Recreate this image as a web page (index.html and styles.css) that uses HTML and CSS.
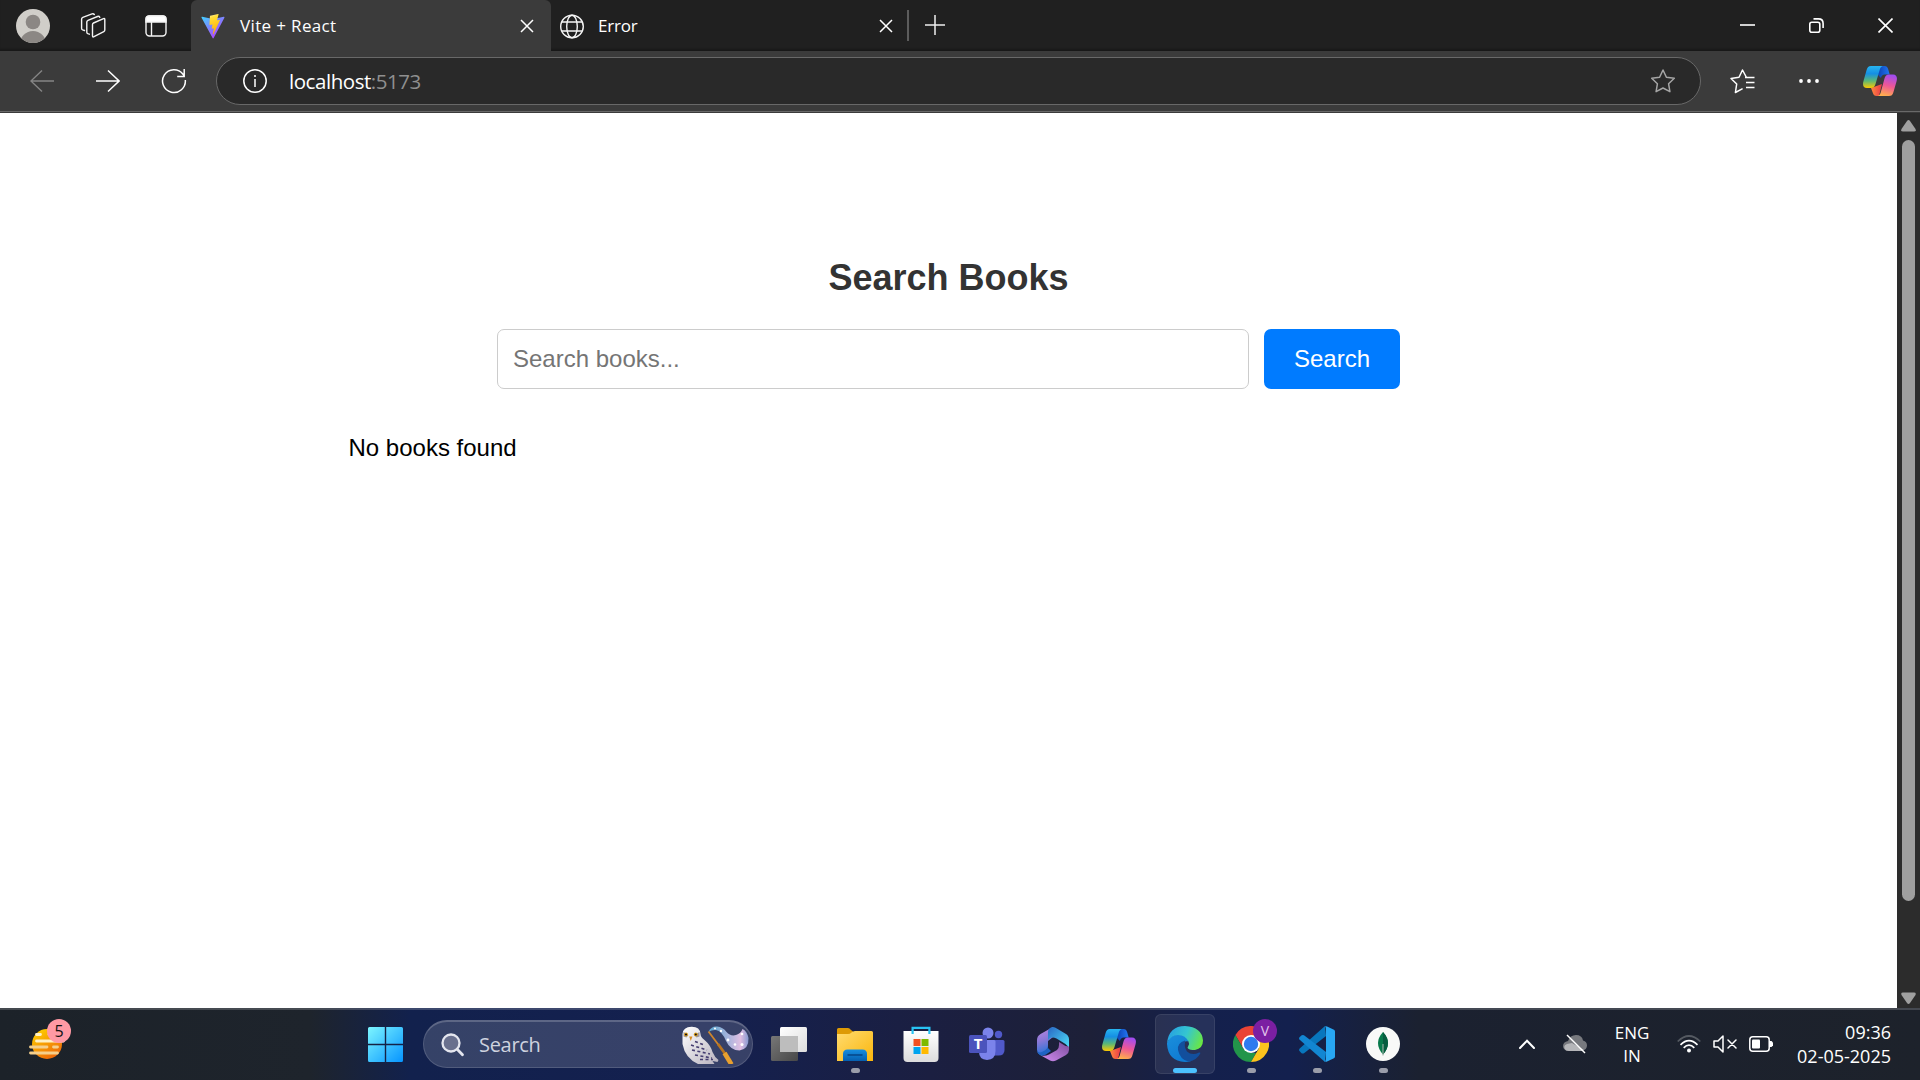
FILE: index.html
```
<!DOCTYPE html>
<html lang="en">
<head>
<meta charset="utf-8">
<title>Vite + React</title>
<link rel="stylesheet" href="styles.css">
</head>
<body>
<svg class="defs" width="0" height="0" aria-hidden="true">
  <defs>
    <linearGradient id="cpBlue" x1="0" y1="0" x2="0" y2="1"><stop offset="0" stop-color="#28b5f0"/><stop offset=".35" stop-color="#158fe4"/><stop offset=".68" stop-color="#5db874"/><stop offset="1" stop-color="#fdc900"/></linearGradient>
    <linearGradient id="cpPink" x1=".6" y1="0" x2=".35" y2="1"><stop offset="0" stop-color="#a14cf0"/><stop offset=".5" stop-color="#ef5795"/><stop offset="1" stop-color="#ffb04b"/></linearGradient>
    <linearGradient id="cpTop"><stop offset="0" stop-color="#0b3fae"/><stop offset="1" stop-color="#2277f5"/></linearGradient>
    <linearGradient id="cpLow"><stop offset="0" stop-color="#ff8a3d"/><stop offset="1" stop-color="#e8374a"/></linearGradient>
    <symbol id="copilot" viewBox="0 0 34 30">
      <path fill="url(#cpTop)" d="M14 0h7.500c2 0 3 1 3.600 3l1.600 5.500h-5c-2 0-3.200 1.500-3.800 3.500L15 9z"/>
      <path fill="url(#cpLow)" d="M8 22l11-4-3 12h-2.500c-2 0-3-1-3.600-3L8 22z"/>
      <path fill="url(#cpBlue)" d="M8 0h12.500c-2 0-3 1.200-3.700 3.500L12.500 18c-.8 2.600-2 4-4.500 4H4C.3 22-.7 19 .5 15L3.600 4C4.400 1.300 5.500 0 8 0z"/>
      <path fill="url(#cpPink)" d="M26 8.500h4c3.700 0 4.600 3 3.500 7l-3.100 10.700C29.600 29 28.500 30 26 30H14c2 0 3-1.200 3.700-3.500L21.500 12.500c.8-2.600 2-4 4.500-4z"/>
    </symbol>
    <linearGradient id="viteA" x1="0" y1="0" x2=".8" y2="1"><stop offset="0" stop-color="#41d1ff"/><stop offset="1" stop-color="#bd34fe"/></linearGradient>
    <linearGradient id="viteB" x1=".4" y1="0" x2=".6" y2="1"><stop offset="0" stop-color="#ffea83"/><stop offset=".15" stop-color="#ffdd35"/><stop offset="1" stop-color="#ffa800"/></linearGradient>
    <linearGradient id="sun" x1=".2" y1="0" x2=".8" y2="1"><stop offset="0" stop-color="#ffd000"/><stop offset="1" stop-color="#ec6008"/></linearGradient>
    <linearGradient id="win" gradientUnits="userSpaceOnUse" x1="0" y1="0" x2="35" y2="35"><stop offset="0" stop-color="#7df6ff"/><stop offset="1" stop-color="#0694ff"/></linearGradient>
    <linearGradient id="folder" x1="0" y1="0" x2="1" y2="1"><stop offset="0" stop-color="#ffdb70"/><stop offset="1" stop-color="#fbb60c"/></linearGradient>
    <linearGradient id="clip" x1="0" y1="0" x2="0" y2="1"><stop offset="0" stop-color="#178ee0"/><stop offset="1" stop-color="#065fb0"/></linearGradient>
    <linearGradient id="bag" x1="0" y1="0" x2="0" y2="1"><stop offset="0" stop-color="#fff"/><stop offset="1" stop-color="#dcdcdc"/></linearGradient>
    <linearGradient id="tvBack" x1="0" y1="0" x2="1" y2="1"><stop offset="0" stop-color="#777"/><stop offset="1" stop-color="#484848"/></linearGradient>
    <linearGradient id="tvFront" x1="0" y1="0" x2="1" y2="1"><stop offset="0" stop-color="#fff"/><stop offset="1" stop-color="#ddd"/></linearGradient>
    <linearGradient id="mA" x1="0" y1="0" x2=".2" y2="1"><stop offset="0" stop-color="#c08ae0"/><stop offset=".5" stop-color="#8a78d8"/><stop offset="1" stop-color="#2673d8"/></linearGradient>
    <linearGradient id="mB" x1="0" y1="0" x2="1" y2="1"><stop offset="0" stop-color="#2866c4"/><stop offset="1" stop-color="#4fe3fa"/></linearGradient>
    <linearGradient id="mC" x1="0" y1="1" x2="1" y2="0"><stop offset="0" stop-color="#d18df0"/><stop offset="1" stop-color="#7b4c9c"/></linearGradient>
    <linearGradient id="edA" x1="0" y1=".3" x2="1" y2=".6"><stop offset="0" stop-color="#269fe2"/><stop offset=".5" stop-color="#35c6d0"/><stop offset="1" stop-color="#6ae842"/></linearGradient>
    <linearGradient id="edB" x1="0" y1="0" x2=".5" y2="1"><stop offset="0" stop-color="#1b8fdc"/><stop offset="1" stop-color="#0f7bd2"/></linearGradient>
    <linearGradient id="owl" x1="0" y1="0" x2="1" y2="1"><stop offset="0" stop-color="#fff"/><stop offset="1" stop-color="#b7b2be"/></linearGradient>
    <linearGradient id="mist"><stop offset="0" stop-color="#5aa6cf"/><stop offset=".5" stop-color="#a9b4dc"/><stop offset=".8" stop-color="#e0bfe2"/><stop offset="1" stop-color="#8698cf"/></linearGradient>
  </defs>
</svg>

<div class="screen">
  <header class="titlebar">
    <div class="title-tools">
      <svg class="avatar" width="34" height="34" viewBox="0 0 34 34"><clipPath id="av"><circle cx="17" cy="17" r="17"/></clipPath><g clip-path="url(#av)"><path fill="#d0cec9" d="M0 0h34v34H0z"/><circle cx="17" cy="13" r="7.300" fill="#8b8784"/><circle cx="17" cy="35" r="13" fill="#8b8784"/></g></svg>
      <svg class="workspaces" width="26" height="26" viewBox="0 0 26 26" fill="none" stroke="#f4f4f4" stroke-width="1.400" stroke-linejoin="round" stroke-linecap="round"><path d="M12.500 11.500q0-1 1-1.500l10-4.300q1.300-.5 1.300.9v10.500q0 1.100-1 1.600l-9.800 5q-1.500.8-1.500-.9z"/><path d="M9.300 21.200l-1.500-.5q-1-.5-1-1.500V9q0-1.200 1.200-1.700l9.500-3.800q1.500-.6 2.300.8"/><path d="M4.500 17.500l-1.800-.6Q1.600 16.500 1.600 15.200V6q0-1.200 1.200-1.700L12 .9q1.500-.5 2.300.6"/></svg>
      <svg class="tab-actions" width="22" height="22" viewBox="0 0 22 22" fill="none" stroke="#f4f4f4" stroke-width="1.400"><rect x="1" y="1" width="20" height="20" rx="3.500"/><path d="M1 7V4q0-3 3-3h14q3 0 3 3v3z" fill="#fff"/><path d="M6.500 7v14"/></svg>
    </div>
    <div class="tab tab-active">
      <svg class="favicon" width="24" height="25" viewBox="0 0 410 404" preserveAspectRatio="none"><path fill="url(#viteA)" d="M400 60 216 389c-4 7-14 7-18 0L10 60c-4-7 2-16 10-14l184 33c1 0 2 0 4 0l180-33c8-1 14 7 12 14z"/><path fill="url(#viteB)" d="M293 2 157 28c-2 0-4 2-4 5l-8 141c0 4 3 6 6 5l38-9c4-1 7 2 6 6l-11 55c-1 4 2 7 6 6l24-7c3-1 7 2 6 6l-18 87c-1 5 6 8 9 4l2-3 111-222c2-3-1-8-5-7l-39 8c-4 1-7-3-6-7l26-88c1-4-3-7-7-6z"/></svg>
      <span class="tab-title">Vite + React</span>
      <svg class="tab-close" width="14" height="14" viewBox="0 0 14 14"><path d="M1 1l12 12M13 1L1 13" stroke="#fff" stroke-width="1.500"/></svg>
    </div>
    <div class="tab">
      <svg class="favicon" width="24" height="25" viewBox="0 0 24 25" fill="none" stroke="#f5f5f5" stroke-width="1.400"><circle cx="12" cy="12.500" r="11.300"/><ellipse cx="12" cy="12.500" rx="5.300" ry="11.300"/><path d="M1.700 8h20.600M1.700 17h20.600"/></svg>
      <span class="tab-title tab-title-short">Error</span>
      <svg class="tab-close" width="14" height="14" viewBox="0 0 14 14"><path d="M1 1l12 12M13 1L1 13" stroke="#fff" stroke-width="1.500"/></svg>
    </div>
    <i class="tab-sep"></i>
    <svg class="new-tab" width="22" height="22" viewBox="0 0 22 22"><path d="M11 1v20M1 11h20" stroke="#eee" stroke-width="1.500"/></svg>
    <div class="window-controls">
      <svg width="15" height="15" viewBox="0 0 15 15"><path d="M0 7h15" stroke="#fff" stroke-width="1.600"/></svg>
      <svg width="15" height="15" viewBox="0 0 15 15" fill="none" stroke="#fff" stroke-width="1.600"><rect x=".8" y="4.200" width="10" height="10" rx="2"/><path d="M4.500 .9H9.500Q14.100 .9 14.100 5.500V10"/></svg>
      <svg width="15" height="15" viewBox="0 0 15 15"><path d="M.5.5l14 14M14.500.5l-14 14" stroke="#fff" stroke-width="1.600"/></svg>
    </div>
  </header>

  <nav class="toolbar">
    <div class="nav-buttons">
      <svg width="24" height="24" viewBox="0 0 24 24" fill="none" stroke="#858585" stroke-width="1.400"><path d="M24 12H.8M12 1.500L.9 12 12 22.500"/></svg>
      <svg width="24" height="24" viewBox="0 0 24 24" fill="none" stroke="#fff" stroke-width="1.500"><path d="M0 12h23.200M12 1.500L23.100 12 12 22.500"/></svg>
      <svg class="reload" width="26" height="26" viewBox="0 0 26 26" fill="none" stroke="#fff" stroke-width="1.500"><path d="M24.300 12A11.400 11.400 0 1 1 22 6.200L23 8M23.200 1v7.500h-7"/></svg>
    </div>
    <div class="address">
      <svg class="info" width="24" height="24" viewBox="0 0 24 24" fill="none" stroke="#fff" stroke-width="1.500"><circle cx="12" cy="12" r="11.200"/><path d="M12 10v8M12 6v2"/></svg>
      <span class="url"><b>localhost</b>:5173</span>
      <svg class="star" width="26" height="26" viewBox="0 0 26 26" fill="none" stroke="#a5a5a5" stroke-width="1.500" stroke-linejoin="round"><path d="M13 2l3.400 7.200 7.900 1.100-5.700 5.500 1.300 7.900L13 20l-6.900 3.700 1.300-7.900-5.700-5.500 7.900-1.100z"/></svg>
    </div>
    <svg class="favorites" width="25" height="25" viewBox="0 0 25 25" fill="none" stroke="#fff" stroke-width="1.500" stroke-linejoin="round"><path d="M24 8.500h-7.500L12.500 1 9 8.300 1 9.500l5.700 5.500L5.400 23.500l7.200-3.800M16 13.500h8.500M16 18.500h8.500M15 8.500h9.500"/></svg>
    <svg class="more" width="20" height="4" viewBox="0 0 20 4" fill="#fff"><circle cx="2" cy="2" r="1.900"/><circle cx="10" cy="2" r="1.900"/><circle cx="18" cy="2" r="1.900"/></svg>
    <svg class="copilot" width="34" height="30"><use href="#copilot"/></svg>
  </nav>

  <div class="viewport">
    <main class="page">
      <h2 class="heading">Search Books</h2>
      <form class="search-form">
        <input class="search-input" type="text" placeholder="Search books...">
        <button class="search-button" type="button">Search</button>
      </form>
      <p class="empty">No books found</p>
    </main>
    <div class="scrollbar">
      <svg width="15" height="12" viewBox="0 0 15 12"><path fill="#a0a0a0" d="M6 1q1.500-1.800 3 0l5.500 8q1 2.500-1.500 2.500H2Q-.5 11.500.5 9z"/></svg>
      <i class="thumb"></i>
      <svg width="15" height="12" viewBox="0 0 15 12"><path fill="#a0a0a0" d="M6 11q1.500 1.800 3 0l5.500-8Q15.500.5 13 .5H2Q-.5.5.5 3z"/></svg>
    </div>
  </div>

  <footer class="taskbar">
    <div class="widgets">
      <svg width="36" height="30" viewBox="0 0 36 30"><circle cx="18" cy="15" r="15" fill="url(#sun)"/><g stroke="#fff0c4" stroke-width="2.800" stroke-linecap="round"><path d="M7.500 5.500h4M7.500 12h27M20 5.500h3" /><path stroke="#f5cf8b" d="M1.500 18h16.500M24.500 18h4M1.500 24h27"/></g></svg>
      <span class="badge">5</span>
    </div>
    <svg class="start" width="35" height="35" viewBox="0 0 35 35" fill="url(#win)"><path d="M1.500 0H16.800V16.800H0V1.500Q0 0 1.500 0zM18.200 0H33.500Q35 0 35 1.500V16.800H18.200zM0 18.200H16.800V35H1.500Q0 35 0 33.500zM18.200 18.200H35V33.500Q35 35 33.500 35H18.200z"/></svg>
    <div class="task-search">
      <svg width="24" height="24" viewBox="0 0 24 24" fill="none" stroke="#e4e6ef" stroke-width="2.300" stroke-linecap="round"><circle cx="10" cy="10" r="8.500" fill="#69708e"/><path d="M16.200 16.200l5.300 5.500" stroke-width="2.800"/></svg>
      <span>Search</span>
      <svg class="owl" width="68" height="38" viewBox="0 0 68 38">
        <path fill="url(#owl)" d="M1.500 8Q2 1 10.500 .8T19.500 8q0 3 4 6 6 5 8 12 2 5 6 8l-1 2-5-1 2 3H17Q4 32 1.500 18z"/>
        <path fill="#3a3350" d="M2.500 6l5 3-2 2.500-3-1zM18.500 6l-5 3 2 2.500 3-1z" opacity=".45"/>
        <circle cx="5" cy="8.500" r="2" fill="#e0a21a"/><circle cx="14.800" cy="8.500" r="2" fill="#e0a21a"/><circle cx="5" cy="8.500" r="1.100" fill="#17121a"/><circle cx="14.800" cy="8.500" r="1.100" fill="#17121a"/><path fill="#d98b1f" d="M8.200 10.500h3.200l-1.600 4.500z"/>
        <g fill="none" stroke="#453d70" stroke-width="1.600" stroke-dasharray="3 2.500"><path d="M14 15.500l8 3M10 19l16 5M11 24l18 4M14 29l17 3M19 33.500h13"/></g>
        <path fill="url(#mist)" d="M27.500 6Q30 0 36 .5q6 .5 9.500 5.500 4 4.500 9.500 3 5-1.500 6.500-6Q66 5 67.500 12q.5 11-9 12.500-9 0-13.500-9.500Q41 5 35 4q-4-.5-7.500 2z"/>
        <g fill="#fff"><circle cx="34" cy="2.500" r="1"/><circle cx="40" cy="5" r="1.200"/><circle cx="47" cy="14" r="1.400"/><circle cx="54" cy="18.500" r="1.300"/><circle cx="61" cy="18.500" r="1.500"/><circle cx="61" cy="8" r="1.300"/></g>
        <path d="M27.500 5.500l10.500 14" stroke="#cf852b" stroke-width="1.800"/><path d="M37 18l8 11" stroke="#b87420" stroke-width="2.800"/><path d="M43.500 27l7 11.500" stroke="#e8a02f" stroke-width="4.600"/>
      </svg>
    </div>
    <div class="apps">
      <div class="app"><svg width="36" height="36" viewBox="0 0 36 36"><rect y="10" width="27" height="25" rx="1.500" fill="url(#tvBack)"/><rect x="9" y="1" width="27" height="25" rx="1.500" fill="url(#tvFront)"/><path fill="#bdbdbd" d="M9 10h18v16H9z"/></svg></div>
      <div class="app running"><svg width="36" height="36" viewBox="0 0 36 36"><path fill="#dd9a05" d="M0 3.500Q0 2 1.500 2H11q1.500 0 3 2l2 1.500V12H0z"/><path fill="url(#folder)" d="M0 8h11q2 0 3.500-1.500Q16 5 18 5h16.500Q36 5 36 6.500V35H0z"/><path fill="url(#clip)" d="M6 35v-7q0-4.500 4.500-4.500h15Q30 23.500 30 28v7z"/><path stroke="#064b8e" stroke-width="1.700" d="M10.500 29h15"/></svg></div>
      <div class="app"><svg width="36" height="36" viewBox="0 0 36 36"><path fill="url(#bag)" d="M.5 5H35.500v27q0 4-4 4h-27q-4 0-4-4z"/><path fill="none" stroke="#28c3f3" stroke-width="2.200" d="M9.600 8V1.800h16.800V8"/><path fill="#f25022" d="M10.500 13h7v7h-7z"/><path fill="#7fba00" d="M18.500 13h7v7h-7z"/><path fill="#00a4ef" d="M10.500 21h7v7h-7z"/><path fill="#ffb900" d="M18.500 21h7v7h-7z"/></svg></div>
      <div class="app"><svg width="36" height="36" viewBox="0 0 36 36"><circle cx="29.500" cy="8.500" r="3.700" fill="#5059c9"/><path fill="#5059c9" d="M24 14h10q1.500 0 1.500 1.500V24q0 5.500-6 5.500H24z"/><circle cx="19" cy="7" r="5.500" fill="#7b83eb"/><path fill="#7b83eb" d="M10 14h15q1.500 0 1.500 1.500V25q0 8.500-8.500 9-8-.5-8-8z"/><rect y="9" width="18" height="18" rx="1.500" fill="#4b53bc"/><text class="glyph" x="9" y="23.300" text-anchor="middle" font-size="15">T</text></svg></div>
      <div class="app"><svg width="36" height="36" viewBox="0 0 36 36"><path fill="url(#mA)" d="M18 1L5.500 8Q2 10 2 14v10q0 3 3 5l2 1 6-8V15l5-4z"/><path fill="url(#mB)" d="M13 14V6q0-3 3-4.500 2-1 4.500.2L31 8q3 2 3 5.500V23q-.5-3-3.500-5l-9-5.500Q16 10 13 14z"/><path fill="url(#mC)" d="M34 20.500V24q0 3-3 5l-10 5.500q-3 1.300-6 0L6 29.500q4 1 8-1l8-4.500q2-1.500 2-5v-3l6.500 4z"/><path fill="#1f63c4" d="M13 19v3l3 3-5 3.500q-3 1.500-6 .5-3-2-3-5 1 4 6 1.500 5-2.500 5-6.500z"/></svg></div>
      <div class="app"><svg width="34" height="30"><use href="#copilot"/></svg></div>
      <div class="app running current"><svg width="36" height="36" viewBox="0 0 36 36"><path fill="url(#edB)" d="M0 17Q3 8.500 11.500 8.500 20 9 21.500 15.500 17 14 14 21q-1 11 10 14-2 1-6 1Q1 35 0 18z"/><path fill="#124f9d" d="M18 14.500Q10 17 11 24q2 10 11 11.700 8-1.700 11.300-8.200.5-1.500-1.300-1-7 3.500-12-1-3-4.500-2-8.500z"/><path fill="url(#edA)" d="M0 17Q2 0 18 0q17 1 18 14.500 0 8-8 9.500-5 0-7-1.500-1-1 .3-2.500 1.500-2 0-5Q18 9 11 9 4 9 0 17z"/></svg></div>
      <div class="app running"><svg width="36" height="36" viewBox="0 0 36 36"><path fill="#ea4335" d="M2.400 9A18 18 0 0 1 33.600 9H18L10.200 22.500z"/><path fill="#22954a" d="M2.400 9l7.800 13.500 7.800 4.500h5L18 36A18 18 0 0 1 2.400 9z"/><path fill="#fcc31d" d="M33.600 9A18 18 0 0 1 18 36l7.800-13.500L18 9z"/><circle cx="18" cy="18" r="9" fill="#fff"/><circle cx="18" cy="18" r="7.200" fill="#2f7bef"/></svg><span class="profile">V</span></div>
      <div class="app running"><svg width="36" height="36" viewBox="0 0 36 36"><path fill="#0876bd" d="M26 0L27 10 5 27.200Q3.500 28 2.300 27L.5 25q-1-1.200.2-2.400z"/><path fill="#1286d2" d="M26 36L27 26 5 9.300Q3.500 8.500 2.300 9.500L.5 11.300q-1 1.200.2 2.400z"/><path fill="#28a7f3" d="M26 .5Q27 0 28 .5l7 3.200q1 .5 1 1.800v25q0 1.300-1 1.800l-7 3.300q-1 .5-2.500-.3Q27 35 27 33V3q0-2-1-2.500z"/></svg></div>
      <div class="app running"><svg width="36" height="36" viewBox="0 0 36 36"><circle cx="18" cy="18" r="17" fill="#f8f9f8"/><path fill="#087a4c" d="M18 6q-10 11 0 22.500Q28 17 18 6z"/><path fill="#075c40" d="M18 6q10 11 0 22.500z"/><path stroke="#a0b3a8" stroke-width="1.100" d="M18 18v11.500"/></svg></div>
    </div>
    <div class="tray">
      <svg class="chevron" width="16" height="10" viewBox="0 0 16 10"><path d="M1 9l7-7.300L15 9" fill="none" stroke="#fff" stroke-width="2" stroke-linecap="round"/></svg>
      <svg class="cloud" width="24" height="20" viewBox="0 0 24 20"><path fill="#77797e" d="M5 17q-5-1-5-5t5-5q2-6 8-6t7 5.500q4 1 4 5t-5 5.500z"/><path fill="#b5b6b9" d="M3 16.500Q-1 12 4 10l5-1 12 7q-1 1-3 1H6z"/><path d="M4 1l18 18" stroke="#fff" stroke-width="1.500"/></svg>
      <div class="lang"><span>ENG</span><span>IN</span></div>
      <svg class="wifi" width="24" height="18" viewBox="0 0 24 18" fill="none" stroke="#fff" stroke-width="1.700"><path stroke="#555a62" d="M.7 6.500Q12-4.500 23.300 6.500"/><path d="M3.500 9.800Q12 1.500 20.500 9.800M6.700 12.800Q12 7.500 17.300 12.800"/><circle cx="12" cy="15.500" r="2" fill="#fff" stroke="none"/></svg>
      <svg class="mute" width="24" height="20" viewBox="0 0 24 20" fill="none" stroke="#fff" stroke-width="1.500" stroke-linejoin="round" stroke-linecap="round"><path d="M1 7h4l5-5v16l-5-5H1zM15 6l8 8M23 6l-8 8"/></svg>
      <svg class="battery" width="24" height="16" viewBox="0 0 24 16"><rect x=".8" y=".8" width="19.400" height="14.400" rx="3" fill="none" stroke="#fff" stroke-width="1.500"/><rect x="3" y="3.500" width="8" height="9" rx="1" fill="#fff"/><path fill="#fff" d="M20 5h2.500l1.500 1.500v3L22.500 11H20z"/></svg>
      <div class="clock"><span>09:36</span><span>02-05-2025</span></div>
    </div>
  </footer>
</div>
</body>
</html>
```
FILE: styles.css
```
* { box-sizing: border-box; }
body { margin: 0; background: #202020; overflow: hidden; }
svg { display: block; flex: none; }
.defs { position: absolute; }
.screen {
  width: 1920px; height: 1080px;
  display: flex; flex-direction: column;
  font-family: "Open Sans", "Noto Sans", sans-serif;
  color: #fff;
}

/* Title bar */
.titlebar { height: 51px; flex: none; display: flex; align-items: center; background: #202020; box-shadow: inset 0 -3px 2px -1px #191919; }
.title-tools { width: 191px; display: flex; align-items: center; padding-left: 16px; }
.workspaces { margin-left: 30px; }
.tab-actions { margin-left: 39px; }
.tab { width: 359px; height: 51px; display: flex; align-items: center; padding: 1px 17px 0 9px; }
.tab-active { width: 360px; background: #3b3b3b; border-radius: 6px 6px 0 0; padding: 1px 17px 0 10px; }
.tab-title { flex: 1; margin-left: 15px; font-size: 17px; line-height: 24px; letter-spacing: .35px; }
.tab-title-short { margin-left: 14px; letter-spacing: -.2px; }
.tab-sep { width: 2px; height: 31px; margin-left: -3px; background: #5c5c5c; }
.new-tab { margin-left: 15px; margin-top: -2px; }
.window-controls { display: flex; gap: 54px; margin-left: auto; padding-right: 27px; }

/* Toolbar */
.toolbar { height: 62px; flex: none; display: flex; align-items: center; padding-bottom: 1px; background: #3b3b3b; border-bottom: 1px solid #3b3b3b; box-shadow: inset 0 -1px #696969; }
.nav-buttons { width: 216px; display: flex; align-items: center; gap: 42px; padding-left: 30px; margin-top: -1px; }
.reload { margin-left: -1px; }
.address { width: 1485px; height: 48px; display: flex; align-items: center; padding: 0 24px 0 26px; background: #292929; border: 1px solid #686868; border-radius: 24px; }
.url { flex: 1; margin-left: 22px; font-size: 20.5px; line-height: 30px; letter-spacing: -.45px; color: #8f8f8f; }
.url b { font-weight: 400; color: #fff; }
.favorites { margin-left: 29px; }
.more { margin-left: 44px; }
.copilot { margin-left: 44px; }

/* Browser content */
.viewport { flex: 1; display: flex; background: #fff; min-height: 0; }
.page { width: 1897px; padding: 142px 348.5px 0; font-family: "Liberation Sans", Arial, sans-serif; color: #000; }
.heading { margin: 0; font-size: 36px; line-height: 46px; text-align: center; color: #333; }
.search-form { display: flex; gap: 15px; width: 903px; margin: 28px auto 0; }
.search-input { flex: 1; min-width: 0; height: 60px; padding: 0 15px; border: 1px solid #ccc; border-radius: 7px; font: 24px "Liberation Sans", Arial, sans-serif; background: #fff; }
.search-input::placeholder { color: #757575; }
.search-button { width: 136px; height: 60px; padding: 0; border: 0; border-radius: 7px; background: #007bff; color: #fff; font: 24px "Liberation Sans", Arial, sans-serif; }
.empty { margin: 44px 0 0; font-size: 24px; line-height: 30px; }
.scrollbar { width: 23px; display: flex; flex-direction: column; align-items: center; padding: 7px 0 4px; background: #2c2c2c; }
.thumb { width: 13px; height: 761px; margin: 8px 0 auto; border-radius: 7px; background: #9f9f9f; }

/* Taskbar */
.taskbar {
  height: 72px; flex: none; display: flex; align-items: center; padding-bottom: 2px;
  border-top: 2px solid rgba(255, 255, 255, .18);
  background: linear-gradient(90deg, #1c2229 0, #1e242c 310px, #12214d 410px, #14204f 710px, #1b1f41 930px, #1d2038 1090px, #14204c 1200px, #13204e 1290px, #1b2130 1420px, #1d222b 1920px) border-box;
}
.widgets { position: relative; width: 368px; padding-left: 29px; }
.badge { position: absolute; left: 47px; top: -10px; width: 24px; height: 24px; border-radius: 50%; background: #ff99a4; color: #111; font-size: 16px; line-height: 24px; text-align: center; }
.task-search { width: 330px; height: 48px; display: flex; align-items: center; margin-left: 20px; padding: 0 3px 0 17px; background: rgba(255, 255, 255, .15); border: 1px solid rgba(255, 255, 255, .14); border-top: 2px solid rgba(255, 255, 255, .2); border-radius: 24px; }
.task-search span { flex: 1; margin-left: 14px; font-size: 20px; line-height: 28px; letter-spacing: -.3px; color: #ced2df; }
.apps { display: flex; gap: 6px; margin-left: 6px; }
.app { position: relative; width: 60px; height: 60px; display: flex; align-items: center; justify-content: center; border-radius: 6px; }
.current { background: rgba(255, 255, 255, .08); border: 1px solid rgba(255, 255, 255, .08); }
.running::after { content: ""; position: absolute; bottom: 1px; left: 50%; width: 9px; height: 5px; margin-left: -4.5px; border-radius: 3px; background: #9a9daa; }
.current::after { bottom: 0; width: 24px; margin-left: -12px; background: #4cc2ff; }
.profile { position: absolute; left: 32px; top: 5px; width: 24px; height: 24px; border-radius: 50%; background: #7b1fa2; color: #e2c4ed; font-size: 14px; line-height: 24px; text-align: center; }
.glyph { fill: #fff; font-weight: 700; }
.tray { display: flex; align-items: center; margin-left: auto; padding-right: 29px; font-size: 17px; line-height: 23px; }
.cloud { margin-left: 28px; }
.lang { width: 40px; display: flex; flex-direction: column; align-items: center; margin-left: 25px; }
.wifi { margin-left: 25px; }
.mute { margin-left: 12px; }
.battery { margin-left: 12px; }
.clock { width: 118px; display: flex; flex-direction: column; align-items: flex-end; font-size: 18px; line-height: 24px; }
```
